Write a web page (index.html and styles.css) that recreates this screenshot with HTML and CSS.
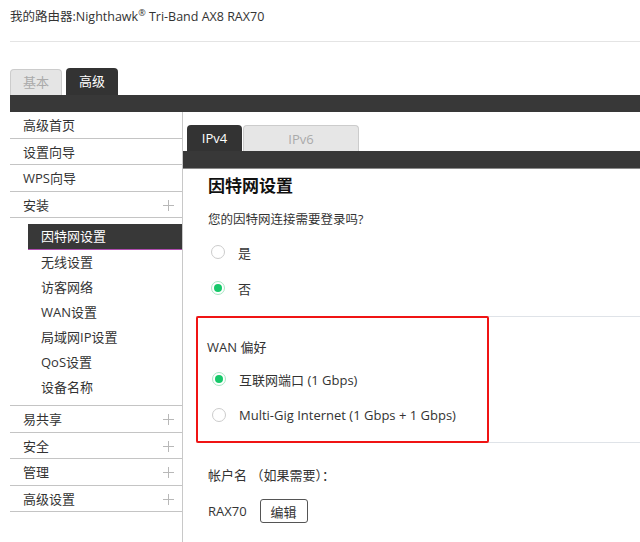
FILE: index.html
```html
<!DOCTYPE html>
<html lang="zh-CN">
<head>
    <meta charset="UTF-8">
    <title>高级 - 因特网设置</title>
    <link rel="stylesheet" href="styles.css">
</head>
<body>

    <div class="cabecalho">
        <div class="titulo">我的路由器:Nighthawk<sup>®</sup> Tri-Band AX8 RAX70</div>
    </div>

    <!-- Abas principais -->
    <div class="abas">
        <div class="aba">基本</div>
        <div class="aba ativa">高级</div>
    </div>
    <div class="barra"></div>

    <div class="layout">
        <!-- Menu lateral -->
        <div class="menu">
            <div class="item">高级首页</div>
            <div class="item">设置向导</div>
            <div class="item">WPS向导</div>
            <div class="item">安装<span class="mais"></span></div>
            <div class="submenu">
                <div class="sub ativo">因特网设置</div>
                <div class="sub">无线设置</div>
                <div class="sub">访客网络</div>
                <div class="sub">WAN设置</div>
                <div class="sub">局域网IP设置</div>
                <div class="sub">QoS设置</div>
                <div class="sub">设备名称</div>
            </div>
            <div class="item">易共享<span class="mais"></span></div>
            <div class="item">安全<span class="mais"></span></div>
            <div class="item">管理<span class="mais"></span></div>
            <div class="item">高级设置<span class="mais"></span></div>
        </div>

        <!-- Conteudo -->
        <div class="conteudo">
            <div class="abas-ip">
                <div class="aba-ip ativa">IPv4</div>
                <div class="aba-ip">IPv6</div>
            </div>
            <div class="barra-ip"></div>

            <div class="painel">
                <h1>因特网设置</h1>
                <p class="pergunta">您的因特网连接需要登录吗?</p>
                <div class="opcao"><span class="radio"></span>是</div>
                <div class="opcao"><span class="radio on"></span>否</div>
            </div>

            <div class="secao-wan">
                <div class="destaque">
                    <p class="rotulo">WAN 偏好</p>
                    <div class="opcao"><span class="radio on"></span>互联网端口 (1 Gbps)</div>
                    <div class="opcao"><span class="radio"></span>Multi-Gig Internet (1 Gbps + 1 Gbps)</div>
                </div>
            </div>

            <div class="painel">
                <p class="conta">帐户名 （如果需要）：</p>
                <div class="linha-conta">
                    <span>RAX70</span>
                    <button class="btn-editar">编辑</button>
                </div>
            </div>
        </div>
    </div>

</body>
</html>
```

FILE: styles.css
```css
body {
    font-family: "Open Sans", "Noto Sans CJK SC", sans-serif;
    font-size: 13px;
    color: #333;
    margin: 0;
    padding: 0;
    background: #fff;
    overflow: hidden;
}

.cabecalho {
    margin-left: 10px;
    height: 41px;
    border-bottom: 1px solid #e4e4e4;
}

.titulo {
    font-size: 12.5px;
    line-height: 20px;
    padding-top: 7px;
}

.titulo sup {
    font-size: 9px;
    line-height: 0;
}

.abas {
    display: flex;
    gap: 4px;
    margin: 26px 0 0 10px;
    align-items: flex-end;
}

.aba {
    width: 50px;
    height: 25px;
    line-height: 25px;
    text-align: center;
    background: #e5e5e5;
    border: 1px solid #ccc;
    border-bottom: none;
    border-radius: 4px 4px 0 0;
    color: #aaa;
}

.aba.ativa {
    width: 52px;
    height: 27px;
    line-height: 27px;
    border: none;
    background: #333;
    color: #fff;
}

.barra {
    height: 17px;
    margin-left: 10px;
    background: #383838;
}

.layout {
    display: flex;
    height: 430px;
}

.menu {
    width: 172px;
    margin-left: 10px;
    border-right: 1px solid #c8c8c8;
}

.item {
    position: relative;
    height: 25.5px;
    line-height: 26px;
    padding-left: 13px;
    border-bottom: 1px solid #c4c4c4;
}

/* sinal de mais do menu */
.mais {
    position: absolute;
    right: 8px;
    top: 8px;
    width: 11px;
    height: 11px;
}

.mais::before, .mais::after {
    content: "";
    position: absolute;
    background: #b8b8b8;
}

.mais::before {
    left: 0;
    top: 5px;
    width: 11px;
    height: 1px;
}

.mais::after {
    left: 5px;
    top: 0;
    width: 1px;
    height: 11px;
}

.submenu {
    padding: 6px 0 5px 18px;
    border-bottom: 1px solid #c4c4c4;
}

.sub {
    height: 25px;
    line-height: 25px;
    padding-left: 13px;
}

.sub.ativo {
    background: #383838;
    color: #fff;
    border-bottom: 1px solid #b04cb0;
}

.conteudo {
    flex: 1;
}

.abas-ip {
    display: flex;
    gap: 1px;
    margin: 13px 0 0 4px;
}

.aba-ip {
    width: 55px;
    height: 26px;
    line-height: 26px;
    text-align: center;
    background: #333;
    color: #fff;
    border-radius: 4px 4px 0 0;
}

.aba-ip:not(.ativa) {
    width: 114px;
    height: 25px;
    background: #e6e6e6;
    border: 1px solid #ccc;
    border-bottom: none;
    color: #aaa;
}

.barra-ip {
    height: 17px;
    background: #383838;
    border-bottom: 1px solid #8a8a8a;
}

.painel {
    padding-left: 25px;
}

h1 {
    font-size: 17px;
    font-weight: bold;
    color: #111;
    line-height: 24px;
    margin: 5px 0 0;
}

.pergunta {
    margin: 12px 0 0;
    line-height: 20px;
    font-size: 12.5px;
}

.opcao {
    display: flex;
    align-items: center;
    height: 36px;
}

.painel .opcao {
    margin-left: 3px;
}

.pergunta + .opcao {
    margin-top: 4px;
}

.radio {
    position: relative;
    width: 12px;
    height: 12px;
    border: 1px solid #ccc;
    border-radius: 50%;
    margin-right: 13px;
    background: #fff;
}

.radio.on {
    border-color: #a8e6c4;
}

.radio.on::after {
    content: "";
    position: absolute;
    left: 2px;
    top: 2px;
    width: 8px;
    height: 8px;
    border-radius: 50%;
    background: #17c86a;
}

.secao-wan {
    margin: 10px 0 0 13px;
    border-top: 1px solid #dfe3e8;
    border-bottom: 1px solid #dfe3e8;
}

.destaque {
    width: 280px;
    margin: -1px 0;
    padding: 19px 0 8px 9px;
    border: 2px solid #f01414;
    border-radius: 2px;
}

.destaque .opcao {
    margin-left: 5px;
}

.rotulo {
    margin: 0 0 4px;
    line-height: 20px;
}

.conta {
    margin: 22px 0 0;
    line-height: 20px;
}

.linha-conta {
    display: flex;
    align-items: center;
    gap: 13px;
    margin-top: 14px;
}

.btn-editar {
    font-family: inherit;
    font-size: 13px;
    color: #333;
    width: 48px;
    height: 24px;
    background: #fff;
    border: 1px solid #555;
    border-radius: 3px;
    padding: 0;
}
```
